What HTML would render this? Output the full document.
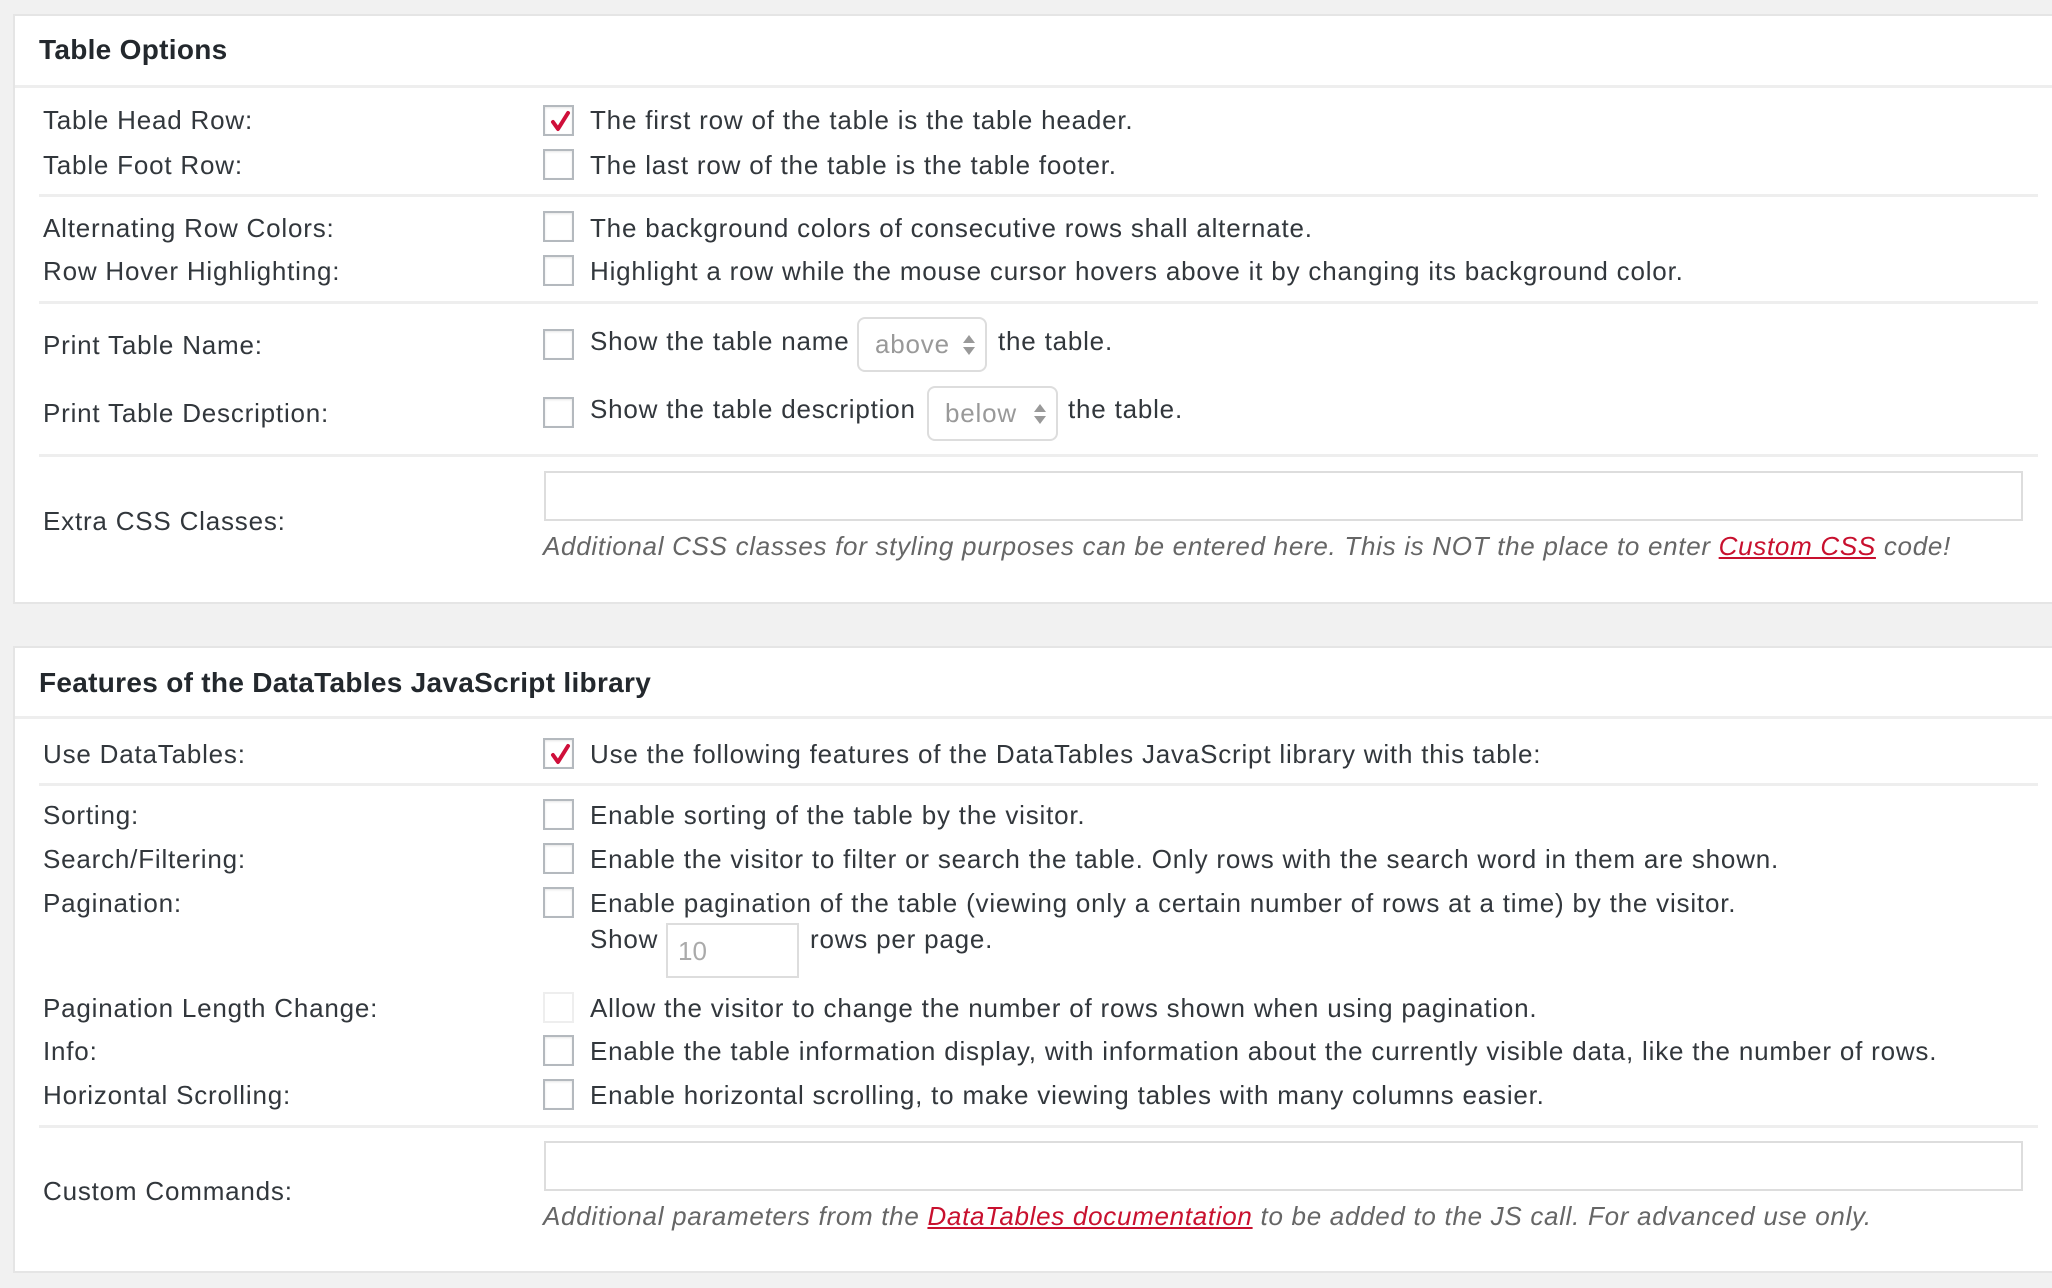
<!DOCTYPE html>
<html><head><meta charset="utf-8"><style>
*{margin:0;padding:0;box-sizing:border-box}
body{width:2052px;height:1288px;background:#f1f1f1;position:relative;overflow:hidden;font-family:"Liberation Sans",sans-serif;color:#32373c}
.p{position:absolute;left:13px;right:0;background:#fff;border:2px solid #e5e5e5;border-right:none}
.a{position:absolute;white-space:nowrap}
.t{font-size:26px;line-height:36px;height:36px;letter-spacing:0.8px}
.h{font-size:28px;font-weight:bold;color:#23282d;line-height:36px;letter-spacing:0.3px}
.hl{position:absolute;height:3px;background:#eee}
.cb{position:absolute;left:543px;width:31px;height:31px;border:2px solid #b4b9be;background:#fff;box-shadow:inset 0 1px 2px rgba(0,0,0,.1)}
.cb.dis{border-color:#eee;box-shadow:none}
.cb svg{position:absolute;left:2px;top:2px}
.sel{position:absolute;border:2px solid #ddd;border-radius:8px;color:#999;font-size:26px;line-height:50px;padding-left:16px;letter-spacing:0.8px}
.ar{position:absolute;right:10px;width:0;height:0;border-left:6px solid transparent;border-right:6px solid transparent}
.inp{position:absolute;border:2px solid #ddd;background:#fff}
.help{font-size:26px;font-style:italic;color:#666;line-height:36px;letter-spacing:0.7px}
.help a{color:#c8102e;text-decoration:underline}
</style></head><body>

<div class="p" style="top:14px;height:590px"></div>
<div class="a h" style="left:39px;top:32px">Table Options</div>
<div class="hl" style="left:15px;right:0;top:85px"></div>

<div class="a t" style="left:43px;top:102px">Table Head Row:</div>
<div class="cb" style="top:105px"><svg width="27" height="27" viewBox="0 0 27 27"><path d="M6 13 L11 20 L21 4" fill="none" stroke="#cf0f3a" stroke-width="4" stroke-linecap="round" stroke-linejoin="round"/></svg></div>
<div class="a t" style="left:590px;top:102px">The first row of the table is the table header.</div>

<div class="a t" style="left:43px;top:147px">Table Foot Row:</div>
<div class="cb" style="top:149px"></div>
<div class="a t" style="left:590px;top:147px">The last row of the table is the table footer.</div>

<div class="hl" style="left:39px;right:14px;top:194px"></div>

<div class="a t" style="left:43px;top:210px">Alternating Row Colors:</div>
<div class="cb" style="top:211px"></div>
<div class="a t" style="left:590px;top:210px">The background colors of consecutive rows shall alternate.</div>

<div class="a t" style="left:43px;top:253px">Row Hover Highlighting:</div>
<div class="cb" style="top:255px"></div>
<div class="a t" style="left:590px;top:253px">Highlight a row while the mouse cursor hovers above it by changing its background color.</div>

<div class="hl" style="left:39px;right:14px;top:301px"></div>

<div class="a t" style="left:43px;top:327px">Print Table Name:</div>
<div class="cb" style="top:329px"></div>
<div class="a t" style="left:590px;top:323px">Show the table name</div>
<div class="sel" style="left:857px;top:317px;width:130px;height:55px">above<span class="ar" style="top:16px;border-bottom:8px solid #999"></span><span class="ar" style="top:28px;border-top:8px solid #999"></span></div>
<div class="a t" style="left:998px;top:323px">the table.</div>

<div class="a t" style="left:43px;top:395px">Print Table Description:</div>
<div class="cb" style="top:397px"></div>
<div class="a t" style="left:590px;top:391px">Show the table description</div>
<div class="sel" style="left:927px;top:386px;width:131px;height:55px">below<span class="ar" style="top:16px;border-bottom:8px solid #999"></span><span class="ar" style="top:28px;border-top:8px solid #999"></span></div>
<div class="a t" style="left:1068px;top:391px">the table.</div>

<div class="hl" style="left:39px;right:14px;top:454px"></div>

<div class="a t" style="left:43px;top:503px">Extra CSS Classes:</div>
<div class="inp" style="left:544px;top:471px;width:1479px;height:50px"></div>
<div class="a help" style="left:543px;top:528px">Additional CSS classes for styling purposes can be entered here. This is NOT the place to enter <a>Custom CSS</a> code!</div>

<div class="p" style="top:646px;height:627px"></div>
<div class="a h" style="left:39px;top:665px">Features of the DataTables JavaScript library</div>
<div class="hl" style="left:15px;right:0;top:716px"></div>

<div class="a t" style="left:43px;top:736px">Use DataTables:</div>
<div class="cb" style="top:738px"><svg width="27" height="27" viewBox="0 0 27 27"><path d="M6 13 L11 20 L21 4" fill="none" stroke="#cf0f3a" stroke-width="4" stroke-linecap="round" stroke-linejoin="round"/></svg></div>
<div class="a t" style="left:590px;top:736px">Use the following features of the DataTables JavaScript library with this table:</div>

<div class="hl" style="left:39px;right:14px;top:783px"></div>

<div class="a t" style="left:43px;top:797px">Sorting:</div>
<div class="cb" style="top:799px"></div>
<div class="a t" style="left:590px;top:797px">Enable sorting of the table by the visitor.</div>

<div class="a t" style="left:43px;top:841px">Search/Filtering:</div>
<div class="cb" style="top:843px"></div>
<div class="a t" style="left:590px;top:841px">Enable the visitor to filter or search the table. Only rows with the search word in them are shown.</div>

<div class="a t" style="left:43px;top:885px">Pagination:</div>
<div class="cb" style="top:887px"></div>
<div class="a t" style="left:590px;top:885px">Enable pagination of the table (viewing only a certain number of rows at a time) by the visitor.</div>
<div class="a t" style="left:590px;top:921px">Show</div>
<div class="inp" style="left:666px;top:923px;width:133px;height:55px;color:#aaa;font-size:26px;line-height:52px;padding-left:10px">10</div>
<div class="a t" style="left:810px;top:921px">rows per page.</div>

<div class="a t" style="left:43px;top:990px">Pagination Length Change:</div>
<div class="cb dis" style="top:992px"></div>
<div class="a t" style="left:590px;top:990px">Allow the visitor to change the number of rows shown when using pagination.</div>

<div class="a t" style="left:43px;top:1033px">Info:</div>
<div class="cb" style="top:1035px"></div>
<div class="a t" style="left:590px;top:1033px">Enable the table information display, with information about the currently visible data, like the number of rows.</div>

<div class="a t" style="left:43px;top:1077px">Horizontal Scrolling:</div>
<div class="cb" style="top:1079px"></div>
<div class="a t" style="left:590px;top:1077px">Enable horizontal scrolling, to make viewing tables with many columns easier.</div>

<div class="hl" style="left:39px;right:14px;top:1125px"></div>

<div class="a t" style="left:43px;top:1173px">Custom Commands:</div>
<div class="inp" style="left:544px;top:1141px;width:1479px;height:50px"></div>
<div class="a help" style="left:543px;top:1198px">Additional parameters from the <a>DataTables documentation</a> to be added to the JS call. For advanced use only.</div>

</body></html>
